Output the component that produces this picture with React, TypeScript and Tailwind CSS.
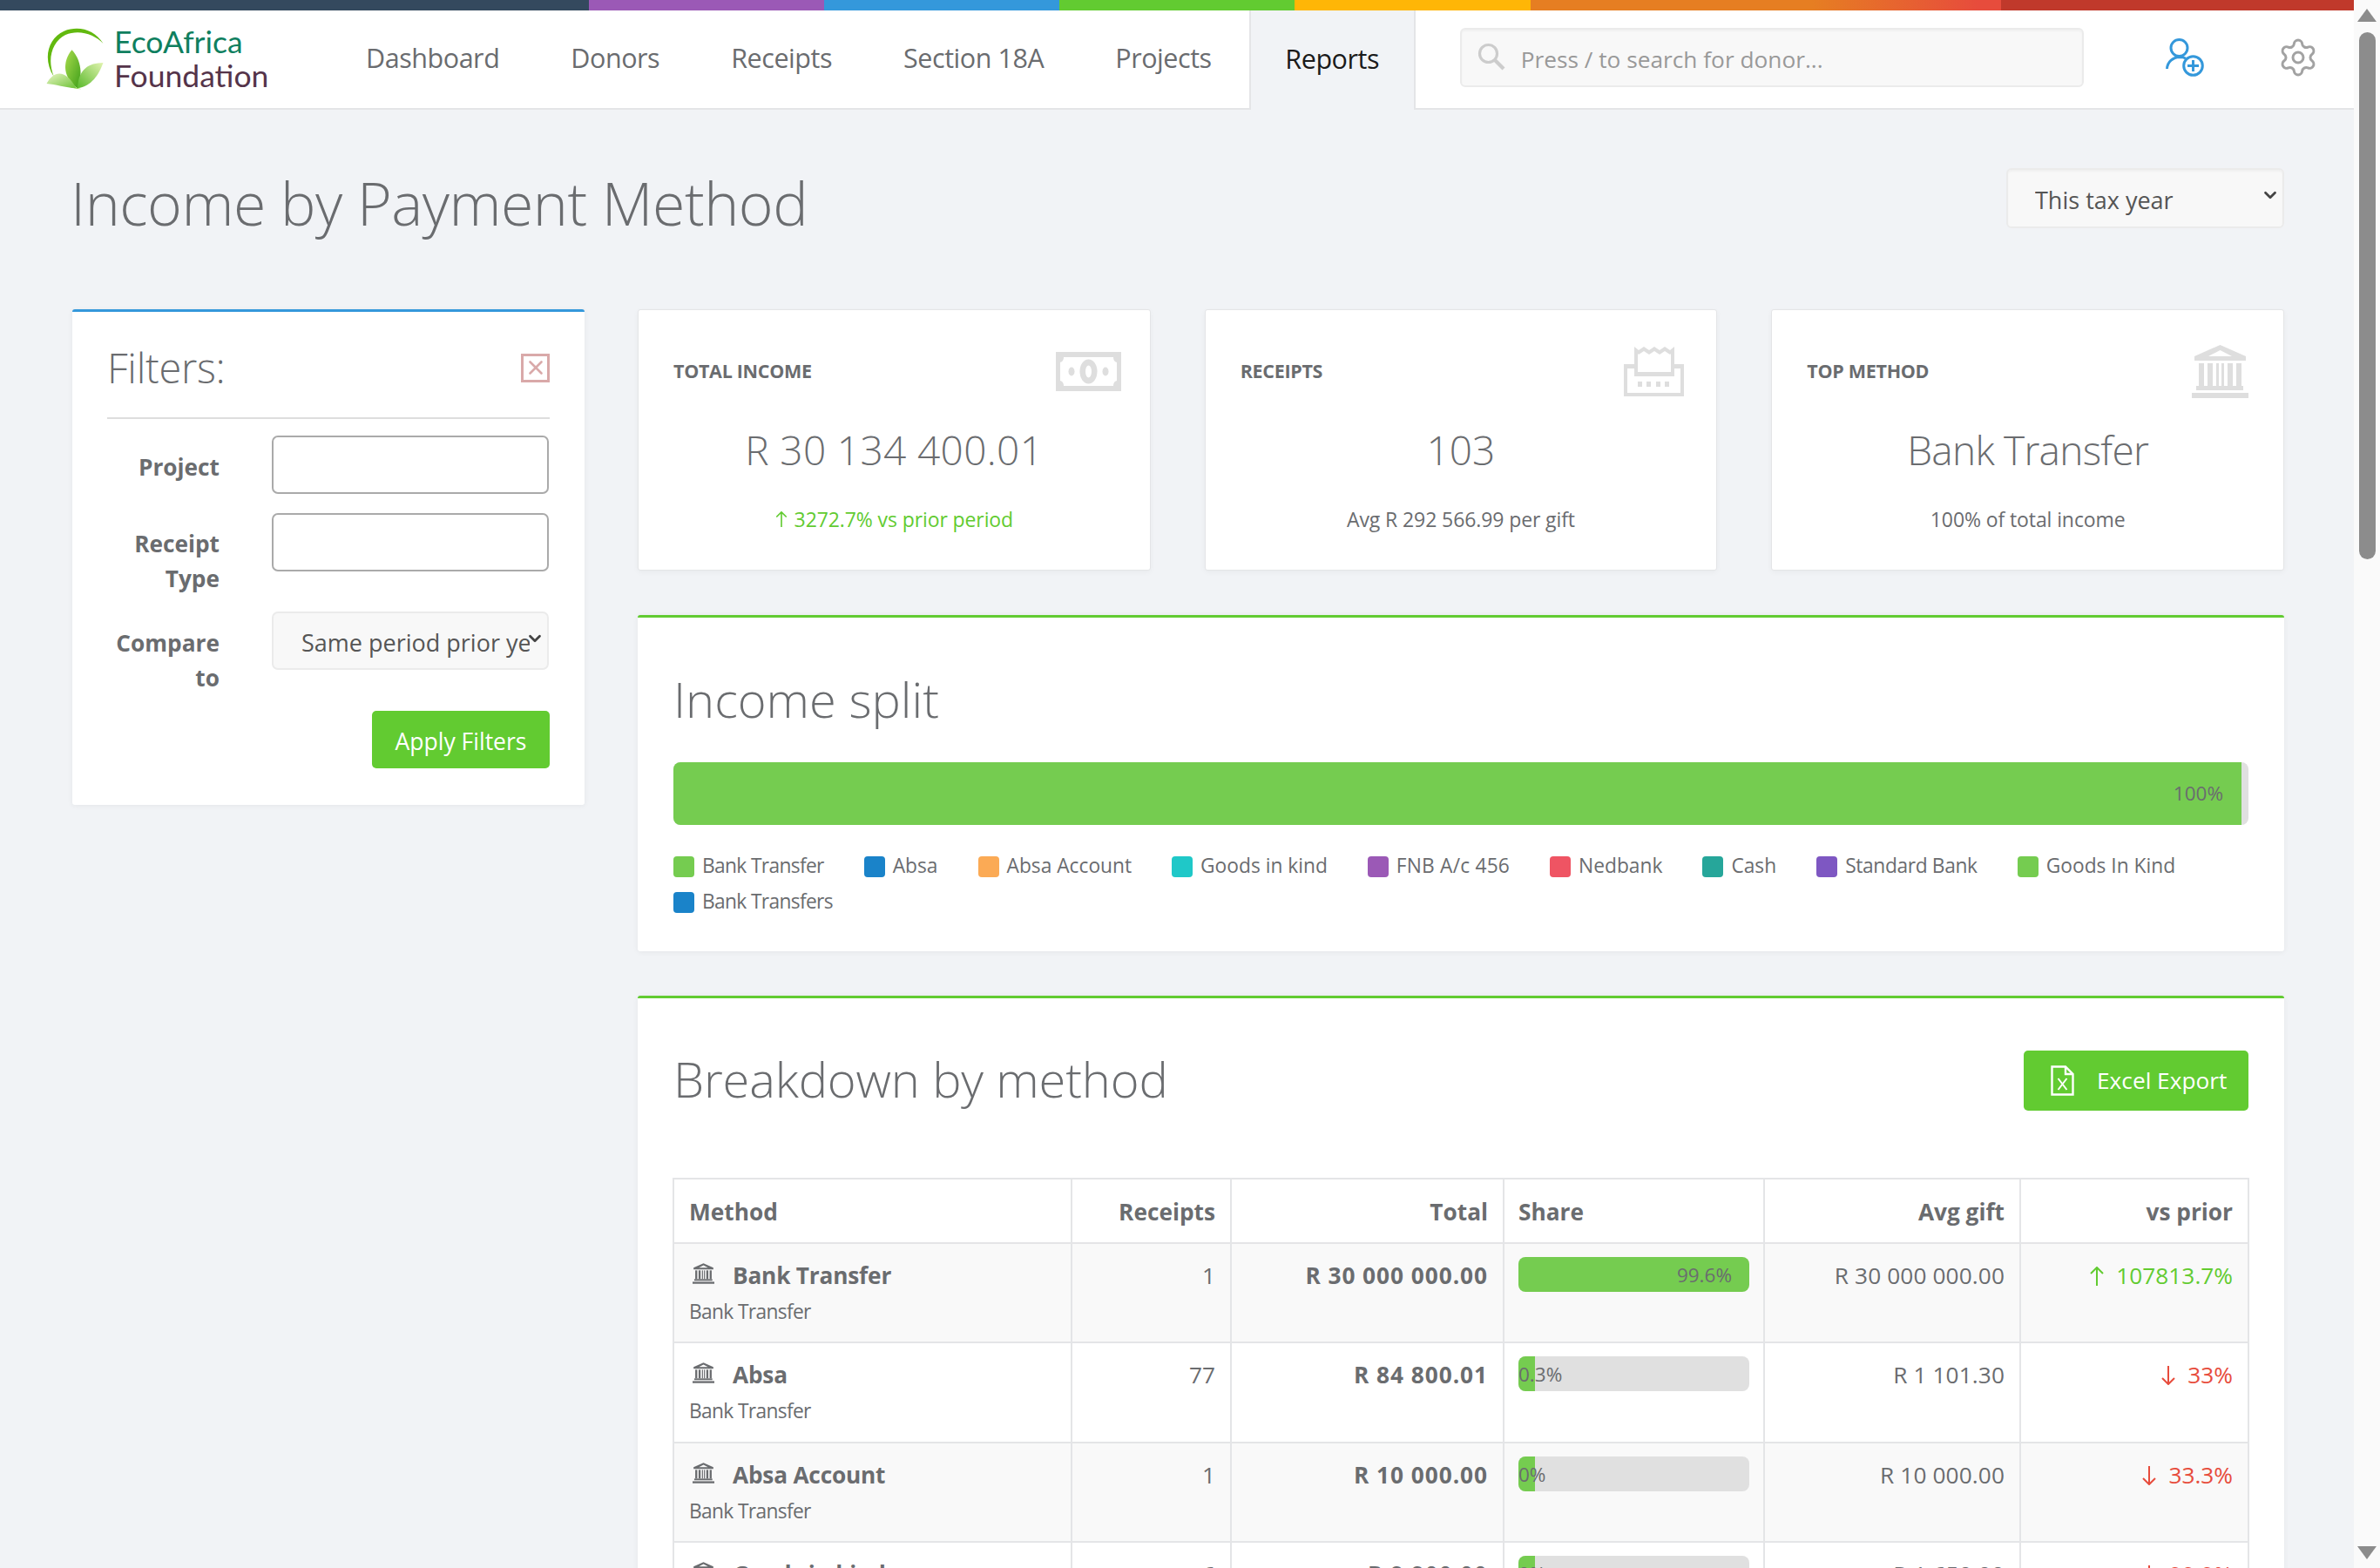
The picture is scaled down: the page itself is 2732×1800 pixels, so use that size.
import React from "react";
import { Settings, ChevronDown, X } from "lucide-react";

const FONT = "font-['Open_Sans',sans-serif]";

function BankIcon({ className, fill }: { className: string; fill: string }) {
  return (
    <svg viewBox="0 0 65 61" className={className} fill={fill}>
      <path fillRule="evenodd" d="M32.5 0 L62 13 V18 H3 V13 Z M32.5 6 L19 13 H46 Z" />
      <rect x="8" y="21" width="6" height="26" />
      <rect x="18" y="21" width="6" height="26" />
      <rect x="28" y="21" width="3" height="26" />
      <rect x="34" y="21" width="3" height="26" />
      <rect x="41" y="21" width="6" height="26" />
      <rect x="51" y="21" width="6" height="26" />
      <rect x="5" y="47" width="54" height="5" />
      <rect x="0" y="55" width="65" height="6" />
    </svg>
  );
}

function MoneyIcon() {
  return (
    <svg viewBox="0 0 75 45" className="w-[75px] h-[45px] mr-[-7px]">
      <rect width="75" height="45" fill="#dedede" />
      <path d="M9 6 H66 Q66 11 70 12 V33 Q66 34 66 39 H9 Q9 34 5 33 V12 Q9 11 9 6 Z" fill="#fff" />
      <ellipse cx="37.5" cy="22.5" rx="10" ry="14" fill="#dedede" />
      <ellipse cx="37.5" cy="22.5" rx="3.5" ry="7" fill="#fff" />
      <ellipse cx="18" cy="22.5" rx="3.5" ry="5" fill="#dedede" />
      <ellipse cx="57" cy="22.5" rx="3.5" ry="5" fill="#dedede" />
    </svg>
  );
}

function ReceiptIcon() {
  return (
    <svg viewBox="0 0 69 57" className="w-[69px] h-[57px] mr-[-3px]">
      <rect y="20" width="69" height="37" fill="#dedede" />
      <rect x="4" y="25" width="61" height="28" fill="#fff" />
      <path d="M12 0 L17 4 L23 0 L29 4 L35 0 L41 4 L47 0 L53 4 L58 0 V34 H12 Z" fill="#dedede" />
      <path d="M16 8 L17 9 L23 5 L29 9 L35 5 L41 9 L47 5 L53 9 L54 8 V29 H16 Z" fill="#fff" />
      <rect x="16" y="40" width="5" height="6" fill="#dedede" />
      <rect x="26" y="40" width="5" height="6" fill="#dedede" />
      <rect x="37" y="40" width="5" height="6" fill="#dedede" />
      <rect x="47" y="40" width="5" height="6" fill="#dedede" />
    </svg>
  );
}

function ArrowUpIcon({ className }: { className: string }) {
  return (
    <svg viewBox="0 0 16 22" className={className} fill="none" stroke="currentColor" strokeWidth="2">
      <path d="M8 22 V1 M1 8 L8 1 L15 8" />
    </svg>
  );
}

function ArrowDownIcon({ className }: { className: string }) {
  return (
    <svg viewBox="0 0 16 22" className={className} fill="none" stroke="currentColor" strokeWidth="2">
      <path d="M8 0 V21 M1 14 L8 21 L15 14" />
    </svg>
  );
}

function Logo() {
  return (
    <svg viewBox="60 55 215 225" className="w-[72px] h-[75px] shrink-0">
      <defs>
        <linearGradient id="lg1" x1="0" y1="0" x2="1" y2="1">
          <stop offset="0" stopColor="#a9dc4c" />
          <stop offset="1" stopColor="#3f9f1a" />
        </linearGradient>
        <linearGradient id="lg2" x1="1" y1="0" x2="0" y2="1">
          <stop offset="0" stopColor="#e2f4b0" />
          <stop offset="1" stopColor="#58b82a" />
        </linearGradient>
        <linearGradient id="lg3" x1="0" y1="0" x2="1" y2="1">
          <stop offset="0" stopColor="#e8f6c4" />
          <stop offset="1" stopColor="#6cc135" />
        </linearGradient>
      </defs>
      <path
        d="M265 118 C235 70 180 55 130 75 C75 100 55 170 95 232 C70 170 90 110 135 88 C180 68 235 85 265 118 Z"
        fill="#62b90f"
      />
      <path d="M95 232 Q130 272 190 275 Q135 262 105 228 Z" fill="#9fd75c" />
      <path d="M157 140 C120 185 130 240 176 272 C195 230 190 175 157 140 Z" fill="url(#lg1)" />
      <path d="M265 184 C215 185 180 205 176 272 C225 265 250 225 265 184 Z" fill="url(#lg2)" />
      <path d="M70 256 C95 210 135 205 172 272 C135 270 100 258 70 256 Z" fill="url(#lg3)" />
    </svg>
  );
}

function UserPlusIcon() {
  return (
    <svg viewBox="0 0 44 44" className="w-[44px] h-[44px]" fill="none" stroke="#3498db" strokeWidth="3">
      <circle cx="15.5" cy="11" r="9.5" />
      <path d="M1.5 35 C2 27 8 22 16 21.5 C19 21.5 21 22 23 23" />
      <circle cx="31.5" cy="31.5" r="10.8" />
      <path d="M31.5 25 V38 M25 31.5 H38" />
    </svg>
  );
}

function ExcelIcon() {
  return (
    <svg viewBox="0 0 27 35" className="w-[27px] h-[35px]" fill="none" stroke="#fff" strokeWidth="2.4">
      <path d="M1.5 1.5 H17 L25.5 10 V33.5 H1.5 Z M17 1.5 V10 H25.5" />
      <path d="M8.5 15 L18.5 28 M18.5 15 L8.5 28" strokeWidth="2" />
    </svg>
  );
}

const navItems = ["Dashboard", "Donors", "Receipts", "Section 18A", "Projects"];

const legend = [
  { name: "Bank Transfer", c: "bg-[#75cc50]", t: "tracking-[-0.65px]" },
  { name: "Absa", c: "bg-[#1a83c9]", t: "" },
  { name: "Absa Account", c: "bg-[#fbaa55]", t: "" },
  { name: "Goods in kind", c: "bg-[#1fc8c8]", t: "" },
  { name: "FNB A/c 456", c: "bg-[#9b59b6]", t: "tracking-[0.2px]" },
  { name: "Nedbank", c: "bg-[#ef5463]", t: "" },
  { name: "Cash", c: "bg-[#26a69a]", t: "" },
  { name: "Standard Bank", c: "bg-[#7e57c2]", t: "tracking-[-0.35px]" },
  { name: "Goods In Kind", c: "bg-[#75cc50]", t: "" },
  { name: "Bank Transfers", c: "bg-[#1a83c9]", t: "tracking-[-0.65px]" },
];

type Row = {
  name: string;
  receipts: string;
  total: string;
  share: string;
  width: string;
  full: boolean;
  avg: string;
  up: boolean;
  prior: string;
  h: string;
};

const rows: Row[] = [
  { name: "Bank Transfer", receipts: "1", total: "R 30 000 000.00", share: "99.6%", width: "100%", full: true, avg: "R 30 000 000.00", up: true, prior: "107813.7%", h: "h-[114px]" },
  { name: "Absa", receipts: "77", total: "R 84 800.01", share: "0.3%", width: "19px", full: false, avg: "R 1 101.30", up: false, prior: "33%", h: "h-[115px]" },
  { name: "Absa Account", receipts: "1", total: "R 10 000.00", share: "0%", width: "19px", full: false, avg: "R 10 000.00", up: false, prior: "33.3%", h: "h-[114px]" },
  { name: "Goods in kind", receipts: "6", total: "R 9 900.00", share: "0%", width: "19px", full: false, avg: "R 1 650.00", up: false, prior: "99.9%", h: "h-[114px]" },
];

function StatCard({
  label,
  icon,
  value,
  valueClass,
  sub,
}: {
  label: string;
  icon: React.ReactNode;
  value: string;
  valueClass: string;
  sub: React.ReactNode;
}) {
  return (
    <div className="h-[300px] bg-white border border-[#e4e5e7] rounded-[3px] shadow-[0_2px_6px_rgba(0,0,0,0.04)] px-[40px] pt-[39px]">
      <div className="flex items-center justify-between h-[62px]">
        <span className="text-[21.5px] font-bold uppercase tracking-[-0.3px] pt-[1px]">{label}</span>
        {icon}
      </div>
      <div className={`mt-[29px] text-center text-[46px] leading-[60px] font-light ${valueClass}`}>{value}</div>
      <div className="mt-[32px] text-center text-[23px] leading-[36px] tracking-[-0.1px]">{sub}</div>
    </div>
  );
}

export default function App() {
  return (
    <div className={`${FONT} flex h-screen overflow-hidden text-[#6a6c6f] bg-[#f1f3f6]`}>
      <div className="w-[2702px] shrink-0 h-full overflow-hidden">
        <div className="h-3 bg-[linear-gradient(to_right,#34495e_676px,#9b59b6_676px,#9b59b6_946px,#3498db_946px,#3498db_1216px,#62cb31_1216px,#62cb31_1486px,#ffb606_1486px,#ffb606_1757px,#e67e22_1757px,#e67e22_2080px,#e74c3c_2270px,#e74c3c_2297px,#c0392b_2297px)]" />
        <header className="h-[114px] bg-white border-b-2 border-[#e4e5e7] flex items-stretch">
          <div className="w-[379px] shrink-0 flex items-center pl-[50px] gap-[9px] pb-[4px]">
            <Logo />
            <div className="font-['Lato',sans-serif] text-[35.5px] leading-[39px] mt-[1px]">
              <div className="text-[#0f7f5f]">EcoAfrica</div>
              <div className="text-[#55344a]">Foundation</div>
            </div>
          </div>
          {navItems.map((n) => (
            <a key={n} className="px-[41px] flex items-center whitespace-nowrap text-[30.5px] tracking-[-0.45px] pb-[2px] text-[#6a6c6f]">
              {n}
            </a>
          ))}
          <a className="ml-[2px] w-[191px] justify-center flex items-center text-[30.5px] tracking-[-0.45px] pb-[2px] text-[#1a1a1a] bg-[#f1f3f6] border-x-2 border-[#e4e5e7] -mb-[2px]">
            Reports
          </a>
          <div className="relative ml-[51px] mt-[20px] w-[716px] h-[68px]">
            <svg viewBox="0 0 32 32" className="absolute left-[20px] top-[17px] w-[32px] h-[32px]" fill="none" stroke="#cccccc" strokeWidth="3.2">
              <circle cx="12.5" cy="12.5" r="10" />
              <path d="M20 20 L30 30" strokeWidth="4.2" />
            </svg>
            <input
              placeholder="Press / to search for donor..."
              className="w-full h-full bg-[#f8f8f8] border-2 border-[#ebebeb] rounded-[6px] shadow-[inset_0_2px_2px_rgba(0,0,0,0.03)] pl-[68px] pt-[3px] text-[26.25px] placeholder:text-[#999] outline-none"
            />
          </div>
          <div className="ml-[94px] mt-[32px]">
            <UserPlusIcon />
          </div>
          <div className="ml-[84px] mt-[30px]">
            <Settings size={48} strokeWidth={1.5} color="#a2a2a2" />
          </div>
        </header>

        <main className="pl-[83px] w-[2622px]">
          <div className="flex justify-between items-start pt-[65px] pb-[80px]">
            <h1 className="ml-[-2px] text-[68px] tracking-[-0.5px] leading-[84px] font-light">Income by Payment Method</h1>
            <div className="relative mt-[2px] w-[319px] h-[69px]">
              <select className="appearance-none w-full h-full bg-[#f8f8f8] border-2 border-[#ebebeb] rounded-[6px] shadow-[inset_0_2px_2px_rgba(0,0,0,0.03)] pl-[31px] pr-[25px] pt-[6px] text-[27px] text-[#555] outline-none">
                <option>This tax year</option>
              </select>
              <ChevronDown size={22} strokeWidth={3} className="absolute right-[5px] top-[20px] text-[#444]" />
            </div>
          </div>

          <div className="grid grid-cols-[588px_1890px] gap-x-[61px] items-start">
            <aside className="h-[569px] bg-white border-t-[3px] border-[#3498db] rounded-[3px] shadow-[0_1px_6px_rgba(0,0,0,0.06)] px-[40px] pt-[35px]">
              <div className="flex justify-between items-center h-[59px]">
                <h3 className="text-[47px] tracking-[-0.3px] leading-[59px] font-light">Filters:</h3>
                <button className="w-[33px] h-[33px] border-[3px] border-[#d9a9a9] flex items-center justify-center mt-[-1px]">
                  <X size={26} strokeWidth={2.4} color="#d9a9a9" />
                </button>
              </div>
              <div className="mt-[27px] border-t-2 border-[#dddddd]" />
              <div className="mt-[19px] flex mb-[22px]">
                <label className="w-[129px] pt-[16px] text-right font-bold text-[26.25px] leading-[40px]">Project</label>
                <input className="ml-[60px] w-[318px] h-[67px] bg-white border-2 border-[#aaaaaa] rounded-[7px] outline-none" />
              </div>
              <div className="flex mb-[18px]">
                <label className="w-[129px] pt-[15px] text-right font-bold text-[26.25px] leading-[40px]">Receipt Type</label>
                <input className="ml-[60px] w-[318px] h-[67px] bg-white border-2 border-[#aaaaaa] rounded-[7px] outline-none" />
              </div>
              <div className="flex mb-[18px]">
                <label className="w-[129px] pt-[16px] text-right font-bold text-[26.25px] leading-[40px]">Compare to</label>
                <div className="relative ml-[60px] w-[318px] h-[67px]">
                  <select className="appearance-none w-full h-full bg-[#f8f8f8] border-2 border-[#ebebeb] rounded-[7px] pl-[32px] pr-[20px] pt-[5px] text-[27px] text-[#555] outline-none">
                    <option>Same period prior year</option>
                  </select>
                  <ChevronDown size={22} strokeWidth={3} className="absolute right-[5px] top-[20px] text-[#444]" />
                </div>
              </div>
              <div className="flex justify-end">
                <button className="w-[204px] h-[66px] bg-[#62cb31] rounded-[5px] text-white text-[26.5px] pt-[5px]">Apply Filters</button>
              </div>
            </aside>

            <div>
              <div className="grid grid-cols-3 gap-x-[62px]">
                <StatCard
                  label="Total income"
                  icon={<MoneyIcon />}
                  value="R 30 134 400.01"
                  valueClass="tracking-[0.35px]"
                  sub={
                    <span className="text-[#62cb31] inline-flex items-center gap-[8px]">
                      <ArrowUpIcon className="w-[14px] h-[18px]" />
                      3272.7% vs prior period
                    </span>
                  }
                />
                <StatCard label="Receipts" icon={<ReceiptIcon />} value="103" valueClass="" sub="Avg R 292 566.99 per gift" />
                <StatCard
                  label="Top method"
                  icon={<BankIcon className="w-[65px] h-[61px]" fill="#dedede" />}
                  value="Bank Transfer"
                  valueClass="tracking-[-0.75px]"
                  sub="100% of total income"
                />
              </div>

              <section className="mt-[51px] h-[386px] bg-white border-t-[3px] border-[#62cb31] rounded-[3px] shadow-[0_1px_6px_rgba(0,0,0,0.06)] px-[41px] pt-[60px]">
                <h2 className="text-[56px] leading-[67px] font-light">Income split</h2>
                <div className="mt-[39px] h-[72px] bg-[#e0e0e0] rounded-[8px] overflow-hidden">
                  <div className="h-full w-[1800px] bg-[#75cc50] flex items-center justify-end pr-[21px] text-[22.5px]">100%</div>
                </div>
                <div className="mt-[27px] flex flex-wrap gap-x-[46px]">
                  {legend.map((l) => (
                    <div key={l.name} className={`flex items-center h-[41px] text-[22.75px] ${l.t}`}>
                      <span className={`w-6 h-6 rounded-[4px] mr-[9px] ${l.c}`} />
                      {l.name}
                    </div>
                  ))}
                </div>
              </section>

              <section className="mt-[51px] bg-white border-t-[3px] border-[#62cb31] rounded-[3px] shadow-[0_1px_6px_rgba(0,0,0,0.06)] px-[41px] pt-[59px]">
                <div className="flex justify-between items-start h-[147px]">
                  <h2 className="text-[56px] tracking-[-0.15px] leading-[67px] font-light">Breakdown by method</h2>
                  <button className="mt-[1px] w-[258px] h-[69px] bg-[#62cb31] rounded-[5px] text-white text-[26.25px] flex items-center pl-[31px] gap-[26px]">
                    <ExcelIcon />
                    Excel Export
                  </button>
                </div>
                <table className="w-[1808px] ml-[-1px] table-fixed border-collapse text-[26.25px] leading-[39px]">
                  <colgroup>
                    <col className="w-[457px]" />
                    <col className="w-[183px]" />
                    <col className="w-[313px]" />
                    <col className="w-[299px]" />
                    <col className="w-[294px]" />
                    <col className="w-[262px]" />
                  </colgroup>
                  <thead>
                    <tr className="h-[74px] bg-white">
                      <th className="border-2 border-[#e4e5e7] px-[17px] pt-[2px] text-left font-bold">Method</th>
                      <th className="border-2 border-[#e4e5e7] px-[17px] pt-[2px] text-right font-bold">Receipts</th>
                      <th className="border-2 border-[#e4e5e7] px-[17px] pt-[2px] text-right font-bold">Total</th>
                      <th className="border-2 border-[#e4e5e7] px-[16px] pt-[2px] text-left font-bold">Share</th>
                      <th className="border-2 border-[#e4e5e7] px-[17px] pt-[2px] text-right font-bold">Avg gift</th>
                      <th className="border-2 border-[#e4e5e7] px-[17px] pt-[2px] text-right font-bold">vs prior</th>
                    </tr>
                  </thead>
                  <tbody>
                    {rows.map((r, i) => (
                      <tr key={r.name} className={`${r.h} ${i % 2 === 0 ? "bg-[#f9f9f9]" : "bg-white"}`}>
                        <td className="border-2 border-[#e4e5e7] px-[17px] pt-[17px] align-top">
                          <div className="flex items-center font-bold tracking-[-0.2px]">
                            <BankIcon className="w-[25px] h-[24px] ml-[4px] mr-[21px] mt-[-5px]" fill="#6a6c6f" />
                            {r.name}
                          </div>
                          <div className="text-[22.75px] tracking-[-0.65px] leading-[36px] mt-[4px]">Bank Transfer</div>
                        </td>
                        <td className="border-2 border-[#e4e5e7] px-[17px] pt-[17px] align-top text-right">{r.receipts}</td>
                        <td className="border-2 border-[#e4e5e7] px-[17px] pt-[17px] align-top text-right font-bold tracking-[0.95px]">{r.total}</td>
                        <td className="border-2 border-[#e4e5e7] px-[16px] pt-[15px] align-top">
                          <div className="h-[40px] bg-[#e0e0e0] rounded-[8px] overflow-hidden flex">
                            <div
                              className={`h-full bg-[#75cc50] flex items-center text-[22.5px] whitespace-nowrap ${r.full ? "justify-end pr-[20px]" : "justify-start"}`}
                              style={{ width: r.width }}
                            >
                              {r.share}
                            </div>
                          </div>
                        </td>
                        <td className="border-2 border-[#e4e5e7] px-[17px] pt-[17px] align-top text-right tracking-[0.1px]">{r.avg}</td>
                        <td className={`border-2 border-[#e4e5e7] px-[17px] pt-[17px] align-top text-right ${r.up ? "text-[#62cb31]" : "text-[#e74c3c]"}`}>
                          <span className="inline-flex items-center gap-[14px]">
                            {r.up ? <ArrowUpIcon className="w-[16px] h-[22px]" /> : <ArrowDownIcon className="w-[16px] h-[22px]" />}
                            {r.prior}
                          </span>
                        </td>
                      </tr>
                    ))}
                  </tbody>
                </table>
              </section>
            </div>
          </div>
        </main>
      </div>

      <div className="w-[30px] shrink-0 h-full bg-[#fafafa] flex flex-col items-center justify-between pb-[10px]">
        <div className="flex flex-col items-center">
          <svg viewBox="0 0 22 15" className="w-[22px] h-[15px] mt-[10px]" fill="#8c8c8c">
            <path d="M11 0 L22 15 H0 Z" />
          </svg>
          <div className="mt-[12px] w-[19px] h-[605px] rounded-full bg-[#8c8c8c]" />
        </div>
        <svg viewBox="0 0 22 15" className="w-[22px] h-[15px]" fill="#8c8c8c">
          <path d="M0 0 H22 L11 15 Z" />
        </svg>
      </div>
    </div>
  );
}
